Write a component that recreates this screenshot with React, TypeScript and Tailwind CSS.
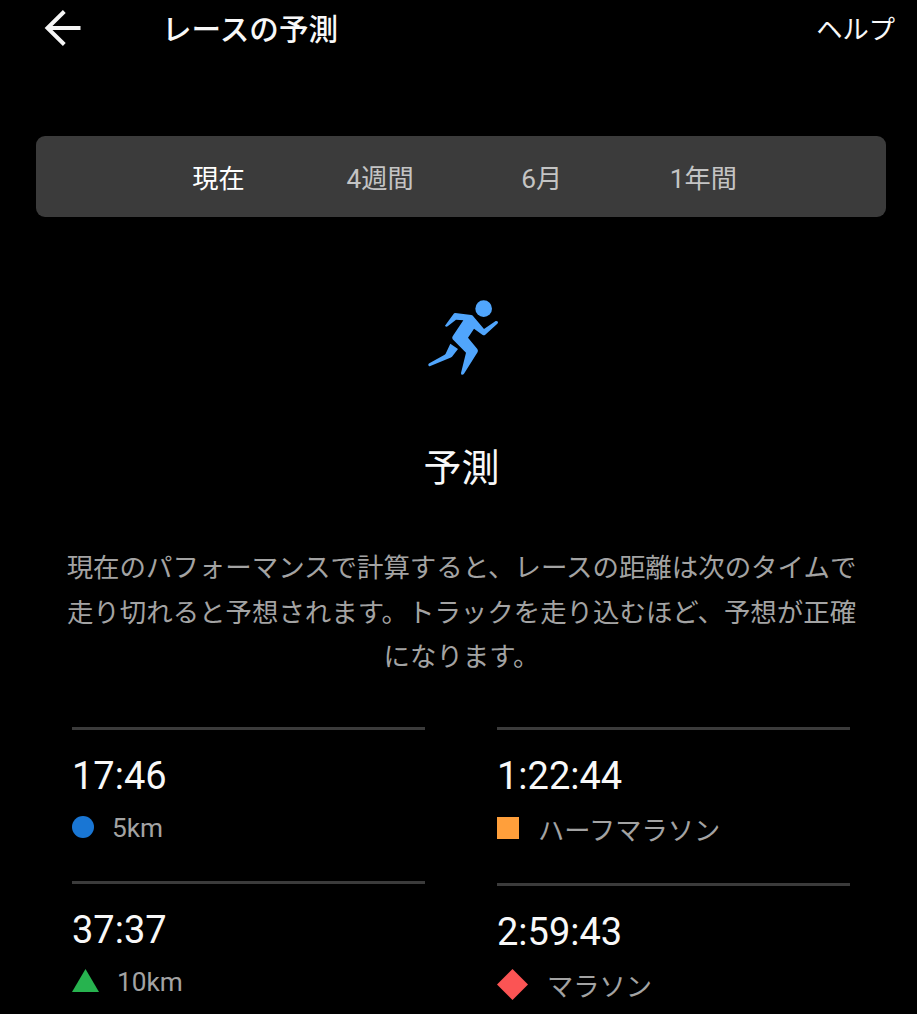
import React from "react";

type Shape = "circle" | "triangle" | "square" | "diamond";

type PredictionProps = {
  time: string;
  label: string;
  shape: Shape;
  wide?: boolean;
};

const tabs = ["現在", "4週間", "6月", "1年間"];

const BackArrow = () => (
  <svg width="38" height="38" viewBox="0 0 38 38" fill="none">
    <path
      d="M36.5 19H4M20.3 2.5L3.5 19L20.3 35.5"
      stroke="#f5f5f5"
      strokeWidth="4"
    />
  </svg>
);

const Runner = () => (
  <svg width="110" height="105" viewBox="0 0 330 315" fill="#50a5fc">
    <circle cx="221" cy="71" r="25" />
    <path d="M136 84L184 90Q188 91 191 95L222 132L257 108Q262 107 264 111Q264 114 262 116L225 150Q221 152 217 149L192 131L174 158L202 192Q205 196 203 201L162 266Q159 270 155 269Q153 267 153 264L168 203L128 163Q125 159 128 154L160 106L138 104L113 124Q108 127 105 122L130 88Q132 84 136 84Z" />
    <path d="M121 176L144 192L126 215Q124 217 121 218L61 243Q56 245 55 240Q54 237 58 235L104 209Q107 207 108 204Z" />
  </svg>
);

const Marker = ({ shape }: { shape: Shape }) => {
  if (shape === "circle") {
    return <div className="h-[22px] w-[22px] rounded-full bg-[#1976d4]" />;
  }
  if (shape === "square") {
    return <div className="h-[22px] w-[22px] bg-[#ff9f3b]" />;
  }
  if (shape === "triangle") {
    return (
      <svg width="27" height="23" viewBox="0 0 27 23" className="mb-px">
        <path d="M13.5 0L27 23H0Z" fill="#27b34f" />
      </svg>
    );
  }
  return (
    <svg width="31" height="31" viewBox="0 0 31 31">
      <path d="M15.5 0L31 15.5L15.5 31L0 15.5Z" fill="#fb5454" />
    </svg>
  );
};

const Prediction = ({ time, label, shape, wide }: PredictionProps) => (
  <div
    className={`border-t-3 border-[#3b3b3b] pt-6 ${wide ? "h-[156px]" : "h-[154px]"}`}
  >
    <p className="h-[44px] text-[38px] leading-[44px] text-[#f8f8f8]">
      {time}
    </p>
    <div className={`flex h-[31px] items-center gap-[18px] ${wide ? "mt-[15px]" : "mt-[14px]"}`}>
      <Marker shape={shape} />
      <p
        className={`text-[26.25px] leading-[31px] text-[#a3a3a3] ${wide ? "pt-1.5 pl-px" : "pt-[2px]"}`}
      >
        {label}
      </p>
    </div>
  </div>
);

const App = () => {
  return (
    <div
      lang="ja"
      className="h-[1014px] w-[917px] overflow-hidden bg-black font-['Roboto','Noto_Sans_CJK_JP',sans-serif] text-[26.25px] text-[#f8f8f8]"
    >
      <header className="flex h-[56px] items-center pr-[22px] pl-[44px]">
        <BackArrow />
        <h1 className="ml-[80px] pt-[3px] text-[29.6px] leading-[44px] font-medium">
          レースの予測
        </h1>
        <button className="ml-auto pt-[5px]">ヘルプ</button>
      </header>

      <nav className="mt-20 mr-[31px] ml-9 flex h-[81px] items-center justify-center rounded-[9px] bg-[#3b3b3b]">
        {tabs.map((tab, i) => (
          <button
            key={tab}
            className={`w-[161.6px] pt-1.5 text-center ${i === 0 ? "text-white" : "text-[#c4c4c4]"}`}
          >
            {tab}
          </button>
        ))}
      </nav>

      <main className="flex flex-col pt-[68px] pr-[62px] pl-[67px]">
        <div className="ml-[343px]">
          <Runner />
        </div>
        <h2 className="mt-[51px] pl-px text-center text-[38px] leading-[54px]">
          予測
        </h2>
        <p className="mt-[51px] -mr-1 -ml-1 pl-px text-center text-[26.45px] leading-[44.5px] whitespace-nowrap text-[#a3a3a3]">
          現在のパフォーマンスで計算すると、レースの距離は次のタイムで
          <br />
          走り切れると予想されます。トラックを走り込むほど、予想が正確
          <br />
          になります。
        </p>

        <div className="mt-[47px] grid grid-cols-[353px_353px] gap-x-[72px] pl-[5px]">
          <div>
            <Prediction time="17:46" label="5km" shape="circle" />
            <Prediction time="37:37" label="10km" shape="triangle" />
          </div>
          <div>
            <Prediction time="1:22:44" label="ハーフマラソン" shape="square" wide />
            <Prediction time="2:59:43" label="マラソン" shape="diamond" wide />
          </div>
        </div>
      </main>
    </div>
  );
};

export default App;
